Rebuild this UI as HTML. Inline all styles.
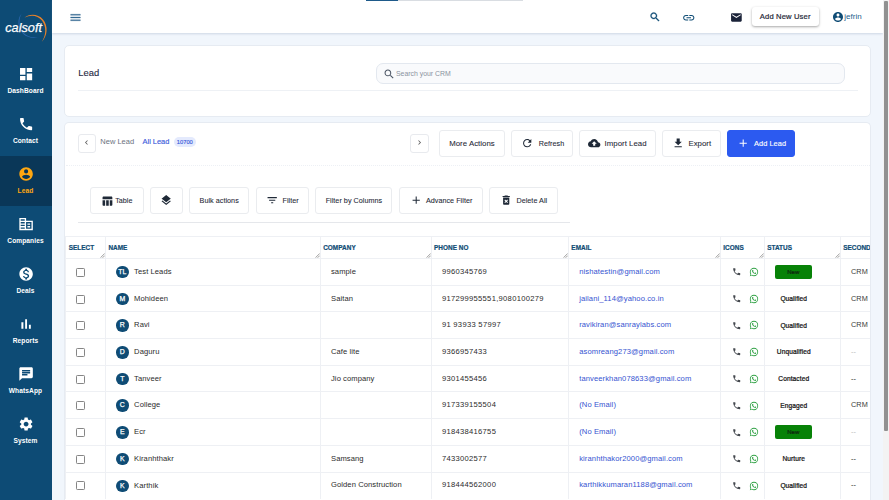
<!DOCTYPE html>
<html><head><meta charset="utf-8"><title>Lead</title>
<style>
*{box-sizing:border-box;margin:0;padding:0}
html,body{width:889px;height:500px;overflow:hidden;background:#f1f6fc;font-family:"Liberation Sans",sans-serif;color:#1f2937}
svg{display:block}
.abs{position:absolute}
#side{position:absolute;left:0;top:0;width:52px;height:500px;background:#0d4b75}
.nav{position:absolute;left:0;width:52px;height:50px;color:#fff;text-align:center}
.nav svg{position:absolute;left:17.7px;top:10px;width:16.2px;height:16.2px;fill:#fff}
.nav span{position:absolute;left:-1px;width:53px;top:31.3px;font-size:6.6px;font-weight:bold;line-height:8px;letter-spacing:.1px}
.nav.act{background:#0a3758;color:#ffa711}
.nav.act svg{fill:#ffa711}
#top{position:absolute;left:52px;top:0;width:831px;height:33.3px;background:#fff;box-shadow:0 1px 2px rgba(120,140,170,.28)}
.card{position:absolute;background:#fff;border:1px solid #e6ebf2;border-radius:5px}
.btn{position:absolute;top:130px;height:26.6px;border:1px solid #eaecef;border-radius:3px;background:#fff;font-size:7.8px;color:#1f2937;display:flex;align-items:center;justify-content:center;gap:4px;white-space:nowrap;font-weight:500;-webkit-text-stroke:.08px #1f2937;letter-spacing:.04px}
.btn svg{width:12.4px;height:12.4px;fill:#1f2937;flex:none}
.b2{top:187.2px;height:26.6px;font-size:7.2px}
#tw{position:absolute;left:64.5px;top:236px;width:805.5px;height:264px;overflow:hidden}
table{border-collapse:collapse;table-layout:fixed;width:850px}
th,td{border:1px solid #eef0f4;font-size:7.6px;height:26.7px;vertical-align:middle;white-space:nowrap;overflow:hidden;position:relative}
th{height:22px;text-align:left;color:#0f4c75;font-size:6.4px;font-weight:bold;padding-left:2.2px;letter-spacing:.05px;-webkit-text-stroke:.2px #0f4c75}
td{padding-left:10px;padding-bottom:1px;color:#2b2b2b;letter-spacing:.08px}
td.em{color:#3553d1}
td.nm{padding-top:.8px;padding-bottom:0}
td.ic,td:first-child{padding-bottom:0}
td.st{text-align:center;padding:0 17.4px 0 0;font-weight:normal;-webkit-text-stroke:.22px #111;color:#111;font-size:6.6px}
td.pn{letter-spacing:.3px}
td.em{letter-spacing:.1px}
td.sr{color:#3a3a3a;font-size:7.3px}
.av{display:inline-block;width:12.4px;height:12.4px;border-radius:50%;background:#0f4c75;color:#fff;font-size:6.9px;font-weight:normal;-webkit-text-stroke:.25px #fff;line-height:12.6px;text-align:center;vertical-align:middle;margin-right:5.5px}
.cb{display:block;position:relative;top:.6px;width:9px;height:9px;border:1px solid #858585;border-radius:1.3px;background:#fff;margin-left:0.7px}
.new{display:inline-block;position:relative;left:-.5px;width:37px;height:14px;background:#078207;border-radius:2px;color:#0d3d0d;font-size:6px;line-height:14px;font-weight:normal}
td.ic{padding:0}
.ph,.wa{position:absolute;top:8.4px;width:9.4px;height:9.4px}
.ph{left:10.9px;fill:#45494f}
.wa{left:27.6px;width:10px;height:10px;top:8.1px;fill:#2ea043}
tr:last-child td{border-bottom-color:transparent}
.rh{position:absolute;right:0;bottom:.2px;width:5.2px;height:5.2px}
</style></head><body>
<div id="side">
<svg class="abs" style="left:0;top:0" width="52" height="50" viewBox="0 0 52 50">
<path d="M24.5 17.6 C29 13.6 38 13.4 43 19.5 C48.5 26 47.5 36 41.8 41.8 C46.2 35.5 46.6 26.8 42 20.6 C37.5 14.6 30 14.6 24.5 17.6Z" fill="#e8822a"/>
<path d="M21.8 13.5 C18 17 17.5 24 20 29.5 C23 36 31 39.5 39 37.2 C31 38.6 23.8 35 21 29 C18.8 24 19 17.5 21.8 13.5Z" fill="#2a66ad"/>
<text x="5.2" y="31.6" font-family="Liberation Sans, sans-serif" font-style="italic" font-size="13.2" fill="#fff" stroke="#fff" stroke-width=".25" textLength="36.8" lengthAdjust="spacingAndGlyphs">calsoft</text>
</svg>
<div class="nav" style="top:56px"><svg viewBox="0 0 24 24"><path d="M3 13h8V3H3v10zm0 8h8v-6H3v6zm10 0h8V11h-8v10zm0-18v6h8V3h-8z"/></svg><span>DashBoard</span></div>
<div class="nav" style="top:106px"><svg viewBox="0 0 24 24"><path d="M6.62 10.79c1.44 2.83 3.76 5.14 6.59 6.59l2.2-2.2c.27-.27.67-.36 1.02-.24 1.12.37 2.33.57 3.57.57.55 0 1 .45 1 1V20c0 .55-.45 1-1 1-9.39 0-17-7.61-17-17 0-.55.45-1 1-1h3.5c.55 0 1 .45 1 1 0 1.25.2 2.45.57 3.57.11.35.03.74-.25 1.02l-2.2 2.2z"/></svg><span>Contact</span></div>
<div class="nav act" style="top:156px"><svg viewBox="0 0 24 24"><path d="M12 2C6.48 2 2 6.48 2 12s4.480 10 10 10 10-4.48 10-10S17.52 2 12 2zm0 3c1.660 0 3 1.340 3 3s-1.340 3-3 3-3-1.340-3-3 1.340-3 3-3zm0 14.200c-2.500 0-4.710-1.280-6-3.220.03-1.990 4-3.080 6-3.080 1.990 0 5.970 1.090 6 3.080-1.290 1.940-3.500 3.220-6 3.220z"/></svg><span>Lead</span></div>
<div class="nav" style="top:206px"><svg viewBox="0 0 24 24"><path d="M12 7V3H2v18h20V7H12zm-2 12H4v-2h6v2zm0-4H4v-2h6v2zm0-4H4V9h6v2zm0-4H4V5h6v2zm10 12h-8V9h8v10zm-2-8h-4v2h4v-2zm0 4h-4v2h4v-2z"/></svg><span>Companies</span></div>
<div class="nav" style="top:256px"><svg viewBox="0 0 24 24"><path d="M12 2C6.48 2 2 6.48 2 12s4.480 10 10 10 10-4.48 10-10S17.52 2 12 2zm1.410 16.090V20h-2.670v-1.930c-1.710-.36-3.160-1.460-3.270-3.400h1.960c.1 1.050.82 1.870 2.650 1.870 1.960 0 2.400-.98 2.400-1.590 0-.83-.44-1.610-2.670-2.140-2.480-.6-4.180-1.620-4.180-3.670 0-1.720 1.390-2.840 3.110-3.210V4h2.670v1.950c1.860.45 2.790 1.860 2.850 3.390H14.300c-.05-1.110-.64-1.870-2.220-1.870-1.500 0-2.400.68-2.400 1.640 0 .84.65 1.390 2.670 1.910s4.180 1.390 4.180 3.910c-.01 1.830-1.380 2.830-3.120 3.160z"/></svg><span>Deals</span></div>
<div class="nav" style="top:306px"><svg viewBox="0 0 24 24"><path d="M5 9.200h3V19H5zM10.600 5h2.800v14h-2.800zm5.600 8H19v6h-2.800z"/></svg><span>Reports</span></div>
<div class="nav" style="top:356px"><svg viewBox="0 0 24 24"><path d="M20 2H4c-1.100 0-1.990.9-1.990 2L2 22l4-4h14c1.100 0 2-.9 2-2V4c0-1.100-.9-2-2-2zM6 9h12v2H6V9zm8 5H6v-2h8v2zm4-6H6V6h12v2z"/></svg><span>WhatsApp</span></div>
<div class="nav" style="top:406px"><svg viewBox="0 0 24 24"><path d="M19.140 12.940c.04-.3.06-.61.06-.94 0-.32-.02-.64-.07-.94l2.030-1.580c.18-.14.23-.41.12-.61l-1.920-3.320c-.12-.22-.37-.29-.59-.22l-2.390.96c-.5-.38-1.030-.7-1.620-.94l-.36-2.540c-.04-.24-.24-.41-.48-.41h-3.840c-.24 0-.43.17-.47.41l-.36 2.540c-.59.24-1.130.57-1.620.94l-2.390-.96c-.22-.08-.47 0-.59.22L2.740 8.870c-.12.21-.08.47.12.61l2.030 1.580c-.05.3-.09.63-.09.940s.02.640.07.940l-2.030 1.580c-.18.14-.23.41-.12.61l1.920 3.320c.12.22.37.29.59.22l2.390-.96c.5.38 1.030.7 1.620.94l.36 2.540c.05.24.24.41.48.41h3.840c.24 0 .44-.17.47-.41l.36-2.540c.59-.24 1.130-.56 1.620-.94l2.390.96c.22.08.47 0 .59-.22l1.920-3.320c.12-.22.07-.47-.12-.61l-2.010-1.580zM12 15.600c-1.980 0-3.600-1.620-3.600-3.600s1.620-3.600 3.600-3.600 3.600 1.620 3.600 3.600-1.620 3.600-3.600 3.600z"/></svg><span>System</span></div>
</div>
<div id="top">
<div class="abs" style="left:17.2px;top:11.2px;width:13px;height:13px;fill:#356a92;stroke:#356a92;stroke-width:.5px"><svg viewBox="0 0 24 24" style=""><path d="M3 18h18v-2H3v2zm0-5h18v-2H3v2zm0-7v2h18V6H3z"/></svg></div>
<div class="abs" style="left:597.2px;top:11px;width:12px;height:12px;fill:#0f4c75;stroke:#0f4c75;stroke-width:.6px"><svg viewBox="0 0 24 24" style=""><path d="M15.5 14h-.79l-.28-.27C15.41 12.59 16 11.11 16 9.5 16 5.91 13.09 3 9.5 3S3 5.91 3 9.5 5.91 16 9.5 16c1.610 0 3.090-.59 4.230-1.570l.27.28v.79l5 4.990L20.490 19l-4.990-5zm-6 0C7.010 14 5 11.990 5 9.500S7.010 5 9.500 5 14 7.010 14 9.500 11.990 14 9.500 14z"/></svg></div>
<div class="abs" style="left:629.5px;top:10.7px;width:13.5px;height:13.5px;fill:#0f4c75"><svg viewBox="0 0 24 24" style=""><path d="M3.900 12c0-1.710 1.390-3.100 3.100-3.100h4V7H7c-2.760 0-5 2.240-5 5s2.240 5 5 5h4v-1.900H7c-1.710 0-3.100-1.390-3.100-3.100zM8 13h8v-2H8v2zm9-6h-4v1.900h4c1.710 0 3.100 1.390 3.100 3.100s-1.390 3.100-3.100 3.100h-4V17h4c2.760 0 5-2.240 5-5s-2.240-5-5-5z"/></svg></div>
<div class="abs" style="left:677.5px;top:10.8px;width:12.8px;height:12.8px;fill:#1a2238"><svg viewBox="0 0 24 24" style=""><path d="M20 4H4c-1.100 0-1.990.9-1.990 2L2 18c0 1.100.9 2 2 2h16c1.100 0 2-.9 2-2V6c0-1.100-.9-2-2-2zm0 4l-8 5-8-5V6l8 5 8-5v2z"/></svg></div>
<div class="abs" style="left:700px;top:7.4px;width:66.5px;height:18.5px;border-radius:3px;background:#fff;box-shadow:0 1px 2.5px rgba(0,0,0,.35);font-size:7.6px;line-height:19.6px;text-align:center;color:#1f2937;-webkit-text-stroke:.2px #1f2937;letter-spacing:.15px">Add New User</div>
<div class="abs" style="left:780px;top:10.6px;width:12px;height:12px;fill:#0f4c75"><svg viewBox="0 0 24 24" style=""><path d="M12 2C6.48 2 2 6.48 2 12s4.480 10 10 10 10-4.48 10-10S17.52 2 12 2zm0 3c1.660 0 3 1.340 3 3s-1.340 3-3 3-3-1.340-3-3 1.340-3 3-3zm0 14.200c-2.500 0-4.710-1.280-6-3.220.03-1.990 4-3.080 6-3.080 1.990 0 5.970 1.090 6 3.080-1.290 1.940-3.500 3.220-6 3.220z"/></svg></div>
<div class="abs" style="left:792.3px;top:11.5px;font-size:8px;line-height:10px;color:#1e5f8e">jefrin</div>
</div>
<div class="abs" style="left:366px;top:0;width:157px;height:1.2px;background:#d9dde2"></div>
<div class="abs" style="left:366px;top:0;width:32px;height:1.4px;background:#1e5a8a"></div>
<div class="abs" style="left:883px;top:0;width:6px;height:500px;background:#f3f3f3"></div>
<div class="abs" style="left:884.4px;top:1px;width:3.6px;height:430px;background:#919191;border-radius:1px"></div>

<div class="card" style="left:64px;top:45px;width:806.5px;height:71.5px">
 <div class="abs" style="left:13.3px;top:20.3px;font-size:9.4px;line-height:13px;color:#1f2a44;-webkit-text-stroke:.12px #1f2a44">Lead</div>
 <div class="abs" style="left:310.5px;top:17.3px;width:469px;height:20.4px;border:1px solid #e3e8ef;border-radius:7px;background:#f9fafc"></div>
 <div class="abs" style="left:317.5px;top:21.5px;width:12.4px;height:12.4px;fill:#4a5463"><svg viewBox="0 0 24 24" style=""><path d="M15.5 14h-.79l-.28-.27C15.41 12.59 16 11.11 16 9.5 16 5.91 13.09 3 9.5 3S3 5.91 3 9.5 5.91 16 9.5 16c1.610 0 3.090-.59 4.230-1.570l.27.28v.79l5 4.990L20.490 19l-4.990-5zm-6 0C7.010 14 5 11.990 5 9.500S7.010 5 9.500 5 14 7.010 14 9.500 11.990 14 9.500 14z"/></svg></div>
 <div class="abs" style="left:331px;top:22.9px;font-size:6.9px;line-height:9px;color:#8a93a0">Search your CRM</div>
 <div class="abs" style="left:12.5px;top:43.8px;width:780px;height:1px;background:#eef1f5"></div>
</div>

<div class="card" style="left:64px;top:121.5px;width:806.5px;height:400px;border-bottom:0"></div>
<div class="abs" style="left:65.5px;top:164.8px;width:804px;height:0;border-top:1px dotted #edf0f5"></div>
<div class="abs" style="left:77.5px;top:134px;width:18px;height:18.6px;border:1px solid #e8eaee;border-radius:3px;background:#fff;fill:#555"><div class="abs" style="left:3.6px;top:3.4px;width:9px;height:9px"><svg viewBox="0 0 24 24" style=""><path d="M15.410 7.410L14 6l-6 6 6 6 1.410-1.410L10.830 12z"/></svg></div></div>
<div class="abs" style="left:100.3px;top:137.2px;font-size:7.5px;line-height:9px;color:#6b7280">New Lead</div>
<div class="abs" style="left:142.6px;top:137.2px;font-size:7.4px;line-height:9px;color:#3b5bdb;-webkit-text-stroke:.15px #3b5bdb">All Lead</div>
<div class="abs" style="left:173.6px;top:137.4px;width:22.4px;height:9.8px;border-radius:5px;background:#e4eafd;color:#3b5bdb;font-size:5.8px;line-height:10.6px;text-align:center;-webkit-text-stroke:.15px #3b5bdb">10700</div>
<div class="abs" style="left:410.1px;top:134px;width:18.5px;height:18.6px;border:1px solid #e8eaee;border-radius:3px;background:#fff;fill:#555"><div class="abs" style="left:4.2px;top:3.4px;width:9px;height:9px"><svg viewBox="0 0 24 24" style=""><path d="M10 6L8.590 7.410 13.170 12l-4.580 4.590L10 18l6-6z"/></svg></div></div>

<div class="btn" style="left:439.4px;width:65.2px">More Actions</div>
<div class="btn" style="left:511.4px;width:61.4px;font-size:7.2px;gap:5.5px;padding-left:1px"><svg viewBox="0 0 24 24" style=""><path d="M17.650 6.350C16.200 4.900 14.210 4 12 4c-4.420 0-7.990 3.580-7.990 8s3.570 8 7.990 8c3.730 0 6.840-2.550 7.730-6h-2.080c-.82 2.330-3.040 4-5.650 4-3.310 0-6-2.690-6-6s2.690-6 6-6c1.660 0 3.140.69 4.220 1.780L13 11h7V4l-2.350 2.350z"/></svg>Refresh</div>
<div class="btn" style="left:579.2px;width:76.4px"><svg viewBox="0 0 24 24" style=""><path d="M19.350 10.040C18.670 6.590 15.640 4 12 4 9.110 4 6.600 5.640 5.350 8.040 2.340 8.360 0 10.910 0 14c0 3.310 2.690 6 6 6h13c2.760 0 5-2.240 5-5 0-2.640-2.050-4.780-4.650-4.960zM14 13v4h-4v-4H7l5-5 5 5h-3z"/></svg>Import Lead</div>
<div class="btn" style="left:662.4px;width:58.5px"><svg viewBox="0 0 24 24" style=""><path d="M19 9h-4V3H9v6H5l7 7 7-7zM5 18v2h14v-2H5z"/></svg>Export</div>
<div class="btn" style="left:727px;width:67.8px;background:#2c5af0;border-color:#2c5af0;color:#fff;-webkit-text-stroke:.12px #fff;fill:#fff;font-size:7.4px;gap:4.5px;padding-left:1.5px"><svg viewBox="0 0 24 24" style="fill:#fff"><path d="M19 13h-6v6h-2v-6H5v-2h6V5h2v6h6v2z"/></svg>Add Lead</div>

<div class="btn b2" style="left:90.4px;width:53.3px;gap:2.2px;padding-top:1px;padding-right:1px"><svg viewBox="0 0 24 24" style=""><path d="M10 10.020h5V21h-5zM17 21h3c1.100 0 2-.9 2-2v-9h-5v11zm3-18H5c-1.100 0-2 .9-2 2v3h19V5c0-1.100-.9-2-2-2zM3 19c0 1.100.9 2 2 2h3V10H3v9z"/></svg>Table</div>
<div class="btn b2" style="left:150px;width:33.3px"><svg viewBox="0 0 24 24" style=""><path d="M11.990 18.540l-7.370-5.730L3 14.070l9 7 9-7-1.630-1.270-7.380 5.740zM12 16l7.360-5.730L21 9l-9-7-9 7 1.630 1.270L12 16z"/></svg></div>
<div class="btn b2" style="left:189.4px;width:59.6px">Bulk actions</div>
<div class="btn b2" style="left:256.2px;width:52.4px"><svg viewBox="0 0 24 24" style=""><path d="M10 18h4v-2h-4v2zM3 6v2h18V6H3zm3 7h12v-2H6v2z"/></svg>Filter</div>
<div class="btn b2" style="left:315.4px;width:77.1px">Filter by Columns</div>
<div class="btn b2" style="left:399.3px;width:83.3px"><svg viewBox="0 0 24 24" style=""><path d="M19 13h-6v6h-2v-6H5v-2h6V5h2v6h6v2z"/></svg>Advance Filter</div>
<div class="btn b2" style="left:489.3px;width:68.6px"><svg viewBox="0 0 24 24" style=""><path d="M6 19c0 1.100.9 2 2 2h8c1.100 0 2-.9 2-2V7H6v12zm2.460-7.120l1.410-1.410L12 12.590l2.120-2.120 1.410 1.410L13.410 14l2.120 2.120-1.410 1.410L12 15.410l-2.120 2.120-1.410-1.410L10.590 14l-2.130-2.120zM15.500 4l-1-1h-5l-1 1H5v2h14V4z"/></svg>Delete All</div>
<div class="abs" style="left:77.5px;top:222px;width:492.5px;height:1px;background:#e5e7eb"></div>
<div id="tw"><table><colgroup><col style="width:40.7px"><col style="width:214.8px"><col style="width:110.9px"><col style="width:137.3px"><col style="width:151.9px"><col style="width:43.9px"><col style="width:76px"><col style="width:74.5px"></colgroup>
<tr><th style="padding-left:3.2px">SELECT<svg class="rh" viewBox="0 0 6 6"><path d="M5.5 0.5L0.5 5.5M5.5 3L3 5.5" stroke="#555" stroke-width=".65" fill="none"/></svg></th><th>NAME<svg class="rh" viewBox="0 0 6 6"><path d="M5.5 0.5L0.5 5.5M5.5 3L3 5.5" stroke="#555" stroke-width=".65" fill="none"/></svg></th><th>COMPANY<svg class="rh" viewBox="0 0 6 6"><path d="M5.5 0.5L0.5 5.5M5.5 3L3 5.5" stroke="#555" stroke-width=".65" fill="none"/></svg></th><th>PHONE NO<svg class="rh" viewBox="0 0 6 6"><path d="M5.5 0.5L0.5 5.5M5.5 3L3 5.5" stroke="#555" stroke-width=".65" fill="none"/></svg></th><th>EMAIL<svg class="rh" viewBox="0 0 6 6"><path d="M5.5 0.5L0.5 5.5M5.5 3L3 5.5" stroke="#555" stroke-width=".65" fill="none"/></svg></th><th>ICONS<svg class="rh" viewBox="0 0 6 6"><path d="M5.5 0.5L0.5 5.5M5.5 3L3 5.5" stroke="#555" stroke-width=".65" fill="none"/></svg></th><th>STATUS<svg class="rh" viewBox="0 0 6 6"><path d="M5.5 0.5L0.5 5.5M5.5 3L3 5.5" stroke="#555" stroke-width=".65" fill="none"/></svg></th><th>SECONDARY</th></tr>
<tr><td><span class="cb"></span></td><td class="nm"><span class="av">TL</span>Test Leads</td><td>sample</td><td class="pn">9960345769</td><td class="em">nishatestin@gmail.com</td><td class="ic"><span class="ph"><svg viewBox="0 0 24 24" style=""><path d="M6.620 10.790c1.440 2.830 3.760 5.140 6.590 6.590l2.200-2.200c.27-.27.67-.36 1.020-.24 1.120.37 2.330.57 3.570.57.55 0 1 .45 1 1V20c0 .55-.45 1-1 1-9.390 0-17-7.610-17-17 0-.55.45-1 1-1h3.500c.55 0 1 .45 1 1 0 1.250.2 2.450.57 3.570.11.35.03.74-.25 1.020l-2.200 2.200z"/></svg></span><span class="wa"><svg viewBox="0 0 24 24" style=""><path d="M16.750 13.960c.25.13.41.2.46.3.06.11.04.61-.21 1.180-.2.56-1.240 1.100-1.700 1.120-.46.02-.47.36-2.960-.73-2.490-1.090-3.990-3.750-4.110-3.920-.12-.17-.96-1.380-.92-2.610.05-1.220.69-1.800.95-2.040.24-.26.51-.29.68-.26h.47c.15 0 .36-.06.55.45l.69 1.870c.06.13.1.28.01.44l-.27.41-.39.42c-.12.12-.26.25-.12.5.12.26.62 1.090 1.320 1.780.91.88 1.710 1.170 1.950 1.300.24.14.39.12.54-.04l.81-.94c.19-.25.35-.19.58-.11l1.670.88M12 2a10 10 0 0 1 10 10 10 10 0 0 1-10 10c-1.970 0-3.800-.57-5.350-1.550L2 22l1.550-4.650A9.969 9.969 0 0 1 2 12 10 10 0 0 1 12 2m0 2a8 8 0 0 0-8 8c0 1.720.54 3.310 1.460 4.610L4.500 19.500l2.890-.96A7.950 7.950 0 0 0 12 20a8 8 0 0 0 8-8 8 8 0 0 0-8-8z"/></svg></span></td><td class="st"><span class="new">New</span></td><td class="sr">CRM</td></tr>
<tr><td><span class="cb"></span></td><td class="nm"><span class="av">M</span>Mohideen</td><td>Saitan</td><td class="pn">917299955551,9080100279</td><td class="em">jailani_114@yahoo.co.in</td><td class="ic"><span class="ph"><svg viewBox="0 0 24 24" style=""><path d="M6.620 10.790c1.440 2.830 3.760 5.140 6.590 6.590l2.200-2.200c.27-.27.67-.36 1.020-.24 1.120.37 2.330.57 3.570.57.55 0 1 .45 1 1V20c0 .55-.45 1-1 1-9.390 0-17-7.610-17-17 0-.55.45-1 1-1h3.500c.55 0 1 .45 1 1 0 1.250.2 2.450.57 3.570.11.35.03.74-.25 1.020l-2.200 2.200z"/></svg></span><span class="wa"><svg viewBox="0 0 24 24" style=""><path d="M16.750 13.960c.25.13.41.2.46.3.06.11.04.61-.21 1.180-.2.56-1.240 1.100-1.700 1.120-.46.02-.47.36-2.960-.73-2.490-1.090-3.990-3.750-4.110-3.920-.12-.17-.96-1.380-.92-2.610.05-1.220.69-1.800.95-2.040.24-.26.51-.29.68-.26h.47c.15 0 .36-.06.55.45l.69 1.870c.06.13.1.28.01.44l-.27.41-.39.42c-.12.12-.26.25-.12.5.12.26.62 1.090 1.320 1.780.91.88 1.710 1.170 1.950 1.300.24.14.39.12.54-.04l.81-.94c.19-.25.35-.19.58-.11l1.670.88M12 2a10 10 0 0 1 10 10 10 10 0 0 1-10 10c-1.970 0-3.800-.57-5.350-1.550L2 22l1.550-4.650A9.969 9.969 0 0 1 2 12 10 10 0 0 1 12 2m0 2a8 8 0 0 0-8 8c0 1.720.54 3.310 1.460 4.610L4.500 19.500l2.890-.96A7.950 7.950 0 0 0 12 20a8 8 0 0 0 8-8 8 8 0 0 0-8-8z"/></svg></span></td><td class="st">Qualified</td><td class="sr">CRM</td></tr>
<tr><td><span class="cb"></span></td><td class="nm"><span class="av">R</span>Ravi</td><td></td><td class="pn">91 93933 57997</td><td class="em">ravikiran@sanraylabs.com</td><td class="ic"><span class="ph"><svg viewBox="0 0 24 24" style=""><path d="M6.620 10.790c1.440 2.830 3.760 5.140 6.590 6.590l2.200-2.200c.27-.27.67-.36 1.020-.24 1.120.37 2.330.57 3.570.57.55 0 1 .45 1 1V20c0 .55-.45 1-1 1-9.390 0-17-7.610-17-17 0-.55.45-1 1-1h3.500c.55 0 1 .45 1 1 0 1.250.2 2.450.57 3.570.11.35.03.74-.25 1.020l-2.200 2.200z"/></svg></span><span class="wa"><svg viewBox="0 0 24 24" style=""><path d="M16.750 13.960c.25.13.41.2.46.3.06.11.04.61-.21 1.180-.2.56-1.240 1.100-1.700 1.120-.46.02-.47.36-2.960-.73-2.490-1.090-3.990-3.750-4.110-3.920-.12-.17-.96-1.380-.92-2.610.05-1.220.69-1.800.95-2.040.24-.26.51-.29.68-.26h.47c.15 0 .36-.06.55.45l.69 1.870c.06.13.1.28.01.44l-.27.41-.39.42c-.12.12-.26.25-.12.5.12.26.62 1.090 1.320 1.780.91.88 1.710 1.170 1.950 1.300.24.14.39.12.54-.04l.81-.94c.19-.25.35-.19.58-.11l1.670.88M12 2a10 10 0 0 1 10 10 10 10 0 0 1-10 10c-1.970 0-3.800-.57-5.350-1.550L2 22l1.550-4.650A9.969 9.969 0 0 1 2 12 10 10 0 0 1 12 2m0 2a8 8 0 0 0-8 8c0 1.720.54 3.310 1.460 4.610L4.500 19.500l2.890-.96A7.950 7.950 0 0 0 12 20a8 8 0 0 0 8-8 8 8 0 0 0-8-8z"/></svg></span></td><td class="st">Qualified</td><td class="sr">CRM</td></tr>
<tr><td><span class="cb"></span></td><td class="nm"><span class="av">D</span>Daguru</td><td>Cafe lite</td><td class="pn">9366957433</td><td class="em">asomreang273@gmail.com</td><td class="ic"><span class="ph"><svg viewBox="0 0 24 24" style=""><path d="M6.620 10.790c1.440 2.830 3.760 5.140 6.590 6.590l2.200-2.200c.27-.27.67-.36 1.020-.24 1.120.37 2.330.57 3.570.57.55 0 1 .45 1 1V20c0 .55-.45 1-1 1-9.390 0-17-7.610-17-17 0-.55.45-1 1-1h3.500c.55 0 1 .45 1 1 0 1.250.2 2.450.57 3.570.11.35.03.74-.25 1.020l-2.200 2.200z"/></svg></span><span class="wa"><svg viewBox="0 0 24 24" style=""><path d="M16.750 13.960c.25.13.41.2.46.3.06.11.04.61-.21 1.180-.2.56-1.240 1.100-1.700 1.120-.46.02-.47.36-2.960-.73-2.490-1.090-3.990-3.750-4.110-3.920-.12-.17-.96-1.380-.92-2.610.05-1.220.69-1.800.95-2.040.24-.26.51-.29.68-.26h.47c.15 0 .36-.06.55.45l.69 1.870c.06.13.1.28.01.44l-.27.41-.39.42c-.12.12-.26.25-.12.5.12.26.62 1.090 1.320 1.780.91.88 1.710 1.170 1.950 1.300.24.14.39.12.54-.04l.81-.94c.19-.25.35-.19.58-.11l1.670.88M12 2a10 10 0 0 1 10 10 10 10 0 0 1-10 10c-1.970 0-3.800-.57-5.350-1.550L2 22l1.550-4.650A9.969 9.969 0 0 1 2 12 10 10 0 0 1 12 2m0 2a8 8 0 0 0-8 8c0 1.720.54 3.310 1.460 4.610L4.500 19.500l2.890-.96A7.950 7.950 0 0 0 12 20a8 8 0 0 0 8-8 8 8 0 0 0-8-8z"/></svg></span></td><td class="st">Unqualified</td><td class="sr" style="color:#bbb">--</td></tr>
<tr><td><span class="cb"></span></td><td class="nm"><span class="av">T</span>Tanveer</td><td>Jio company</td><td class="pn">9301455456</td><td class="em">tanveerkhan078633@gmail.com</td><td class="ic"><span class="ph"><svg viewBox="0 0 24 24" style=""><path d="M6.620 10.790c1.440 2.830 3.760 5.140 6.590 6.590l2.200-2.200c.27-.27.67-.36 1.020-.24 1.120.37 2.330.57 3.570.57.55 0 1 .45 1 1V20c0 .55-.45 1-1 1-9.390 0-17-7.610-17-17 0-.55.45-1 1-1h3.500c.55 0 1 .45 1 1 0 1.250.2 2.450.57 3.570.11.35.03.74-.25 1.020l-2.200 2.200z"/></svg></span><span class="wa"><svg viewBox="0 0 24 24" style=""><path d="M16.750 13.960c.25.13.41.2.46.3.06.11.04.61-.21 1.180-.2.56-1.240 1.100-1.700 1.120-.46.02-.47.36-2.960-.73-2.490-1.090-3.990-3.750-4.110-3.920-.12-.17-.96-1.380-.92-2.610.05-1.220.69-1.800.95-2.040.24-.26.51-.29.68-.26h.47c.15 0 .36-.06.55.45l.69 1.870c.06.13.1.28.01.44l-.27.41-.39.42c-.12.12-.26.25-.12.5.12.26.62 1.090 1.320 1.780.91.88 1.710 1.170 1.950 1.300.24.14.39.12.54-.04l.81-.94c.19-.25.35-.19.58-.11l1.670.88M12 2a10 10 0 0 1 10 10 10 10 0 0 1-10 10c-1.970 0-3.800-.57-5.350-1.550L2 22l1.550-4.650A9.969 9.969 0 0 1 2 12 10 10 0 0 1 12 2m0 2a8 8 0 0 0-8 8c0 1.720.54 3.310 1.460 4.610L4.500 19.500l2.890-.96A7.950 7.950 0 0 0 12 20a8 8 0 0 0 8-8 8 8 0 0 0-8-8z"/></svg></span></td><td class="st">Contacted</td><td class="sr" style="color:#222">--</td></tr>
<tr><td><span class="cb"></span></td><td class="nm"><span class="av">C</span>College</td><td></td><td class="pn">917339155504</td><td class="em">(No Email)</td><td class="ic"><span class="ph"><svg viewBox="0 0 24 24" style=""><path d="M6.620 10.790c1.440 2.830 3.760 5.140 6.590 6.590l2.200-2.200c.27-.27.67-.36 1.020-.24 1.120.37 2.330.57 3.570.57.55 0 1 .45 1 1V20c0 .55-.45 1-1 1-9.390 0-17-7.610-17-17 0-.55.45-1 1-1h3.500c.55 0 1 .45 1 1 0 1.250.2 2.450.57 3.570.11.35.03.74-.25 1.020l-2.200 2.200z"/></svg></span><span class="wa"><svg viewBox="0 0 24 24" style=""><path d="M16.750 13.960c.25.13.41.2.46.3.06.11.04.61-.21 1.180-.2.56-1.240 1.100-1.700 1.120-.46.02-.47.36-2.960-.73-2.490-1.090-3.990-3.750-4.110-3.920-.12-.17-.96-1.380-.92-2.610.05-1.220.69-1.800.95-2.040.24-.26.51-.29.68-.26h.47c.15 0 .36-.06.55.45l.69 1.870c.06.13.1.28.01.44l-.27.41-.39.42c-.12.12-.26.25-.12.5.12.26.62 1.090 1.320 1.780.91.88 1.710 1.170 1.950 1.300.24.14.39.12.54-.04l.81-.94c.19-.25.35-.19.58-.11l1.670.88M12 2a10 10 0 0 1 10 10 10 10 0 0 1-10 10c-1.970 0-3.800-.57-5.350-1.550L2 22l1.550-4.650A9.969 9.969 0 0 1 2 12 10 10 0 0 1 12 2m0 2a8 8 0 0 0-8 8c0 1.720.54 3.310 1.460 4.610L4.500 19.500l2.890-.96A7.950 7.950 0 0 0 12 20a8 8 0 0 0 8-8 8 8 0 0 0-8-8z"/></svg></span></td><td class="st">Engaged</td><td class="sr">CRM</td></tr>
<tr><td><span class="cb"></span></td><td class="nm"><span class="av">E</span>Ecr</td><td></td><td class="pn">918438416755</td><td class="em">(No Email)</td><td class="ic"><span class="ph"><svg viewBox="0 0 24 24" style=""><path d="M6.620 10.790c1.440 2.830 3.760 5.140 6.590 6.590l2.200-2.200c.27-.27.67-.36 1.020-.24 1.120.37 2.330.57 3.570.57.55 0 1 .45 1 1V20c0 .55-.45 1-1 1-9.390 0-17-7.610-17-17 0-.55.45-1 1-1h3.500c.55 0 1 .45 1 1 0 1.250.2 2.450.57 3.570.11.35.03.74-.25 1.020l-2.200 2.200z"/></svg></span><span class="wa"><svg viewBox="0 0 24 24" style=""><path d="M16.750 13.960c.25.13.41.2.46.3.06.11.04.61-.21 1.180-.2.56-1.240 1.100-1.700 1.120-.46.02-.47.36-2.960-.73-2.490-1.090-3.990-3.750-4.110-3.920-.12-.17-.96-1.380-.92-2.610.05-1.220.69-1.800.95-2.040.24-.26.51-.29.68-.26h.47c.15 0 .36-.06.55.45l.69 1.870c.06.13.1.28.01.44l-.27.41-.39.42c-.12.12-.26.25-.12.5.12.26.62 1.090 1.320 1.780.91.88 1.710 1.170 1.950 1.300.24.14.39.12.54-.04l.81-.94c.19-.25.35-.19.58-.11l1.670.88M12 2a10 10 0 0 1 10 10 10 10 0 0 1-10 10c-1.970 0-3.800-.57-5.350-1.550L2 22l1.550-4.650A9.969 9.969 0 0 1 2 12 10 10 0 0 1 12 2m0 2a8 8 0 0 0-8 8c0 1.720.54 3.310 1.460 4.610L4.500 19.500l2.890-.96A7.950 7.950 0 0 0 12 20a8 8 0 0 0 8-8 8 8 0 0 0-8-8z"/></svg></span></td><td class="st"><span class="new">New</span></td><td class="sr" style="color:#bbb">--</td></tr>
<tr><td><span class="cb"></span></td><td class="nm"><span class="av">K</span>Kiranhthakr</td><td>Samsang</td><td class="pn">7433002577</td><td class="em">kiranhthakor2000@gmail.com</td><td class="ic"><span class="ph"><svg viewBox="0 0 24 24" style=""><path d="M6.620 10.790c1.440 2.830 3.760 5.140 6.590 6.590l2.200-2.200c.27-.27.67-.36 1.020-.24 1.120.37 2.330.57 3.570.57.55 0 1 .45 1 1V20c0 .55-.45 1-1 1-9.390 0-17-7.610-17-17 0-.55.45-1 1-1h3.500c.55 0 1 .45 1 1 0 1.250.2 2.450.57 3.570.11.35.03.74-.25 1.020l-2.200 2.200z"/></svg></span><span class="wa"><svg viewBox="0 0 24 24" style=""><path d="M16.750 13.960c.25.13.41.2.46.3.06.11.04.61-.21 1.180-.2.56-1.240 1.100-1.700 1.120-.46.02-.47.36-2.960-.73-2.490-1.090-3.990-3.750-4.110-3.920-.12-.17-.96-1.380-.92-2.610.05-1.220.69-1.800.95-2.040.24-.26.51-.29.68-.26h.47c.15 0 .36-.06.55.45l.69 1.870c.06.13.1.28.01.44l-.27.41-.39.42c-.12.12-.26.25-.12.5.12.26.62 1.090 1.320 1.780.91.88 1.710 1.170 1.950 1.300.24.14.39.12.54-.04l.81-.94c.19-.25.35-.19.58-.11l1.670.88M12 2a10 10 0 0 1 10 10 10 10 0 0 1-10 10c-1.970 0-3.800-.57-5.350-1.550L2 22l1.550-4.650A9.969 9.969 0 0 1 2 12 10 10 0 0 1 12 2m0 2a8 8 0 0 0-8 8c0 1.720.54 3.310 1.460 4.610L4.500 19.500l2.890-.96A7.950 7.950 0 0 0 12 20a8 8 0 0 0 8-8 8 8 0 0 0-8-8z"/></svg></span></td><td class="st">Nurture</td><td class="sr" style="color:#222">--</td></tr>
<tr><td><span class="cb"></span></td><td class="nm"><span class="av">K</span>Karthik</td><td>Golden Construction</td><td class="pn">918444562000</td><td class="em">karthikkumaran1188@gmail.com</td><td class="ic"><span class="ph"><svg viewBox="0 0 24 24" style=""><path d="M6.620 10.790c1.440 2.830 3.760 5.140 6.590 6.590l2.200-2.200c.27-.27.67-.36 1.020-.24 1.120.37 2.330.57 3.570.57.55 0 1 .45 1 1V20c0 .55-.45 1-1 1-9.390 0-17-7.610-17-17 0-.55.45-1 1-1h3.500c.55 0 1 .45 1 1 0 1.250.2 2.450.57 3.570.11.35.03.74-.25 1.020l-2.200 2.200z"/></svg></span><span class="wa"><svg viewBox="0 0 24 24" style=""><path d="M16.750 13.960c.25.13.41.2.46.3.06.11.04.61-.21 1.180-.2.56-1.240 1.100-1.700 1.120-.46.02-.47.36-2.960-.73-2.490-1.090-3.990-3.750-4.110-3.920-.12-.17-.96-1.380-.92-2.610.05-1.220.69-1.800.95-2.040.24-.26.51-.29.68-.26h.47c.15 0 .36-.06.55.45l.69 1.870c.06.13.1.28.01.44l-.27.41-.39.42c-.12.12-.26.25-.12.5.12.26.62 1.090 1.320 1.780.91.88 1.710 1.170 1.950 1.300.24.14.39.12.54-.04l.81-.94c.19-.25.35-.19.58-.11l1.670.88M12 2a10 10 0 0 1 10 10 10 10 0 0 1-10 10c-1.970 0-3.800-.57-5.350-1.550L2 22l1.550-4.650A9.969 9.969 0 0 1 2 12 10 10 0 0 1 12 2m0 2a8 8 0 0 0-8 8c0 1.720.54 3.310 1.460 4.610L4.500 19.500l2.890-.96A7.950 7.950 0 0 0 12 20a8 8 0 0 0 8-8 8 8 0 0 0-8-8z"/></svg></span></td><td class="st">Qualified</td><td class="sr" style="color:#222">--</td></tr>
</table></div>
</body></html>
